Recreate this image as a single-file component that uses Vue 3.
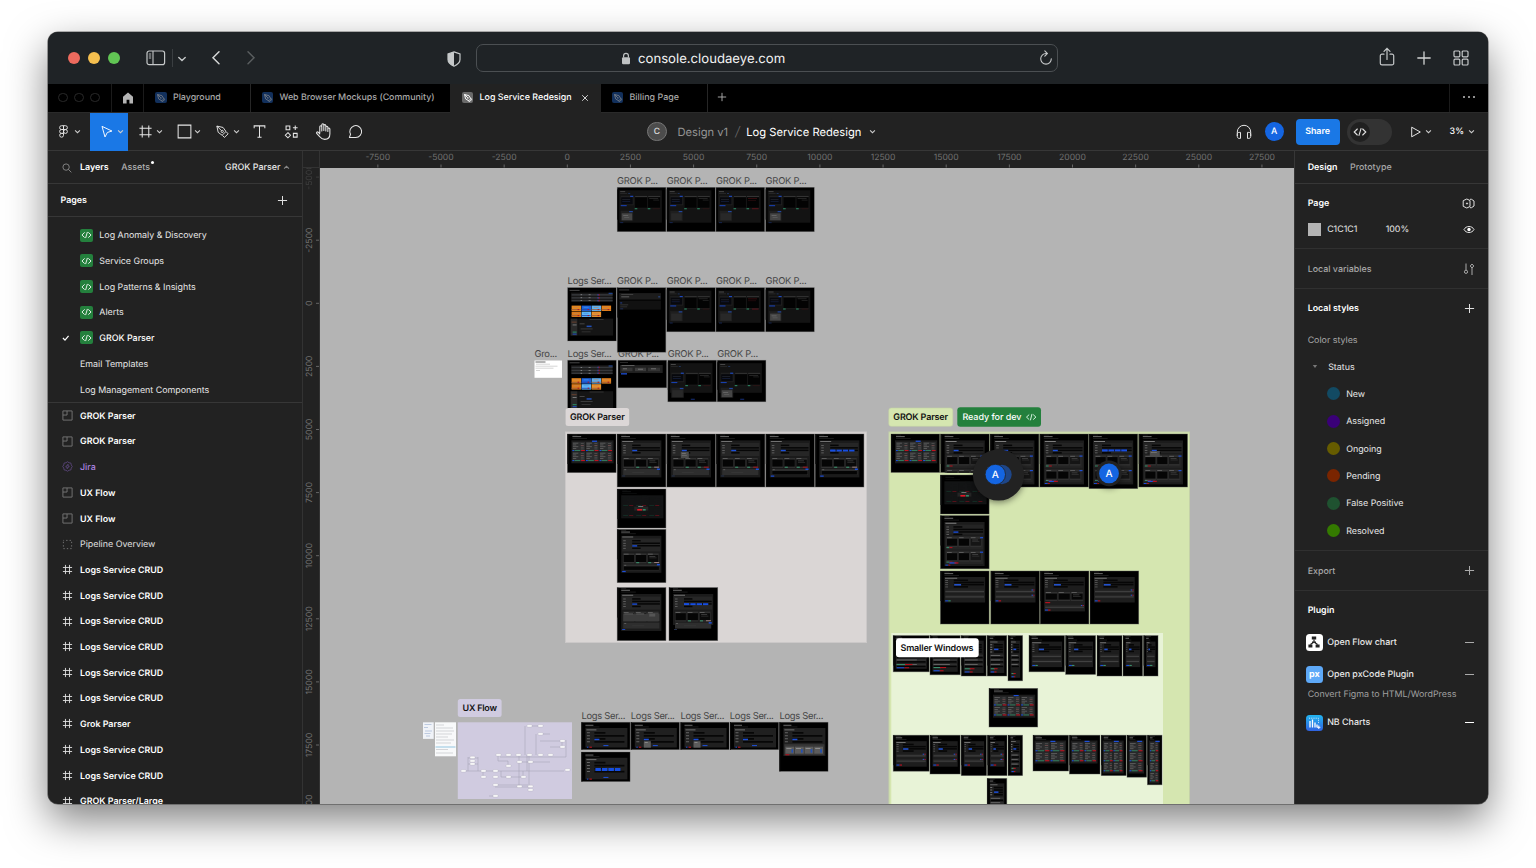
<script setup>
const pages = ['Log Anomaly & Discovery', 'Service Groups', 'Log Patterns & Insights', 'Alerts', 'GROK Parser']
const plainPages = ['Email Templates', 'Log Management Components']
const layers = [
  ['section', 'GROK Parser'], ['section', 'GROK Parser'], ['widget', 'Jira'],
  ['section', 'UX Flow'], ['section', 'UX Flow'], ['group', 'Pipeline Overview'],
  ['frame', 'Logs Service CRUD'], ['frame', 'Logs Service CRUD'], ['frame', 'Logs Service CRUD'],
  ['frame', 'Logs Service CRUD'], ['frame', 'Logs Service CRUD'], ['frame', 'Logs Service CRUD'],
  ['frame', 'Grok Parser'], ['frame', 'Logs Service CRUD'], ['frame', 'Logs Service CRUD'],
  ['frame', 'GROK Parser/Large']
]
const statuses = [
  ['New', '#124a63'], ['Assigned', '#3a0078'], ['Ongoing', '#665c00'],
  ['Pending', '#7a2500'], ['False Positive', '#1f5230'], ['Resolved', '#347a00']
]
const hTicks = Array.from({ length: 15 }, (_, i) => ({ v: (i - 3) * 2500, p: 567.3 + (i - 3) * 63.15 }))
const vTicks = Array.from({ length: 11 }, (_, i) => ({ v: (i - 2) * 2500, p: 303.3 + (i - 2) * 63.1 }))

const BLUE = '#1d4fd8', RED = '#b3121d', GREEN = '#3a8f6c'

// Three mapping cards with coloured action bars beneath
function cards(x, y, w, h, last = '#060606') {
  const c = w / 3, o = []
  for (let i = 0; i < 3; i++) {
    o.push([x + i * c, y, c - 0.7, h, '#303030'], [x + i * c + 0.5, y + 1.6, c - 1.7, h - 3, i === 2 ? last : '#050505'])
    o.push([x + i * c + 0.6, y + 0.4, c * 0.4, 0.6, '#777'])
  }
  o.push([x + c * 2 + 2, y + 2.6, c * 0.5, 0.6, '#555'], [x + c * 2 + 2, y + 4.2, c * 0.6, 0.6, '#3d3d3d'])
  return o
}
function head(w, x = 4) {
  return [[0, 0, 1.2, 30, '#101010'], [x, 0.8, 5, 0.5, '#333'], [x, 2.2, w * 0.18, 0.9, '#777'], [x, 4.2, w * 0.3, 0.5, '#333']]
}
function fields(w, bx, n = 4) {
  const o = []
  for (let i = 0; i < n; i++) {
    const y = 11 + i * 2.5
    o.push([6, y, 2.6, 0.8, '#6a6a6a'])
    o.push([bx, y - 0.4, i % 3 === 0 ? (w - bx) * 0.25 : w - bx - 6, 1.5, '#060606'])
  }
  o.push([bx, 15.8, Math.min(5, w * 0.2), 1.4, BLUE])
  return o
}
const kinds = {
  parse(w, h, v) {
    const t = v.top || 0, o = [[0, 2, 1, h - 14, '#0c0c0c'], [2, 3, w - 6, h - 12, '#131313'], [3, 4, 5, 0.8, '#555'], [3, 6, 7, 0.6, '#333'], [11, 6, 2, 0.7, '#274073']]
    o.push([3.5, 8.5 + t, 13, 9.5, '#202020'], [4, 10 + t, 11.5, 7, '#07080d'], [13, 8.5 + t, 3, 1, BLUE], [5, 12 + t, 8, 0.5, '#303540'], [5, 14 + t, 8, 0.5, '#1d2a55'], [3.5, 17.8 + t, 6, 1.1, '#183fae'])
    for (const i of [17.5, 30.5]) o.push([i, 8.5 + t, 12.8, 13, '#1a1a1a'], [i + 0.4, 10 + t, 12, 10.4, '#030303'], [i + 0.5, 8.7 + t, 12, 0.8, '#3a3a3a'], [i, 20.8 + t, 2.6, 1.2, '#2b7d5c'])
    o.push([36, 21 + t, 6.5, 0.9, v.red ? '#63151c' : '#2c1515'])
    if (v.red) o.push([32, 11 + t, 9, 0.6, '#531116'], [32, 13 + t, 8, 0.5, '#3a1114'])
    else o.push([32, 11 + t, 9, 0.5, '#444'], [36, 12.5 + t, 6, 0.5, '#383838'])
    o.push([3.5, 23.5 + t, 12.5, 10, '#1f1f1f'], [4.5, 26 + t, 10.5, 7, v.light ? '#454545' : '#282828'], [12, 23.7 + t, 3.6, 1.2, '#2046a0'])
    if (v.light) o.push([6, 28 + t, 5, 0.6, '#777'], [7, 30 + t, 5, 0.6, '#666'])
    o.push(t ? [23, 38.6, 4, 0.8, '#1d3c99'] : [3, 35, 3, 0.8, '#182c60'])
    return o
  },
  empty(w) {
    return [[0, 0, 1, 30, '#0e0e0e'], [2, 2, 10, 0.7, '#555'], [2, 5.5, w - 7, 6.5, '#1c1c1c'], [4, 6.8, 12, 0.6, '#555'], [4, 8.4, 8, 1.5, '#484848'], [41, 8.5, 2, 1.4, '#294172'], [2, 13, w - 7, 9, '#111'], [3, 15, 2, 0.7, '#2d55c5'], [3, 17, 8, 0.6, '#4a4a4a'], [3, 19, 7, 0.6, '#444'], [3, 21, 3, 0.6, '#2b4384']]
  },
  dash(w) {
    const o = [[2, 2.3, 10, 0.7, '#666'], [3.5, 5, 41.5, 9, '#171717'], [41, 5.2, 4, 1.4, '#1e438c']]
    for (const y of [6.5, 9.5, 12.3]) o.push([4, y, 41, 1.5, '#35373a'], [13, y + 0.4, 1.5, 0.6, '#aaa'], [21, y + 0.4, 2, 0.6, '#999'], [30, y, 1, 1.5, BLUE], [31, y, 1, 1.5, RED])
    const cols = ['#e8871c', '#1d62dc', '#5db0f6', '#e8831a', '#dd7917', '#62b8f8', '#ee922a']
    for (let i = 0; i < 7; i++) {
      const x = 4 + (i % 4) * 10, y = 18 + Math.floor(i / 4) * 6
      o.push([x, y, 9.5, 5.4, cols[i]], [x, y + 3.6, 9, 0.9, i % 4 === 1 ? '#2149ac' : '#97603d'], [x + 2, y + 1.3, 5, 0.7, i % 4 === 1 ? '#4090e8' : '#ba865a'], [x + 6, y + 3.5, 1.5, 1, RED])
    }
    o.push([3, 31, 7, 17, '#292929'], [10.5, 31, 35, 17, '#151515'], [4, 34, 5, 1, '#68402d'], [22, 31.5, 14, 0.6, '#484848'], [5, 37, 4, 0.7, '#999'], [12, 36, 5, 0.6, '#666'], [19, 38, 5, 1.5, '#214fb6'], [13, 41, 12, 0.7, '#4b4b4b'], [14, 44, 9, 0.6, '#444'], [5, 44, 4, 1, '#278f6a'], [5, 46, 4, 1, '#2150c5'])
    return o
  },
  slim(w) {
    return [[2, 2, 8, 0.6, '#444'], [2, 4.8, w - 6, 8, '#202020'], [3.5, 5, 13, 0.7, '#777'], [3.5, 7.5, 11, 3.5, '#353535'], [17, 7.5, 11, 3.5, '#3b3b3b'], [30, 7.5, 12, 3.5, '#333'], [5, 8.3, 4, 0.7, '#888'], [20, 8.6, 5, 0.7, '#888'], [33, 8.3, 5, 0.7, '#888'], [3, 13, 6, 1.3, BLUE]]
  },
  table(w, h, v) {
    const n = v.n || 3, rows = v.rows || 2, left = w > 40 ? 5 : 2.5, top = w > 40 ? 8 : 7, cw = (w - left - 3) / n, o = head(w, left)
    o.push([left - 1, top - 1.7, w - left - 1.5, rows * 10 + 3, '#1c1c1c'], [left + (w - left) * 0.45, top - 1.4, Math.min(5, w * .3), 1.3, BLUE])
    for (let j = 0; j < rows; j++) for (let i = 0; i < n; i++) {
      const x = left + i * cw, y = top + j * 10
      o.push([x, y, cw - 0.9, 9.2, '#2b2c2d'])
      for (let k = 0; k < 4; k++) o.push([x + 0.5, y + 0.8 + k * 1.8, cw * (k % 2 ? 0.25 : 0.4), 0.7, '#6a6a6a'], [x + cw * 0.62, y + 1.2 + k * 1.8, cw * 0.22, 0.7, k === 1 ? '#7e5555' : '#585858'])
      o.push([x, y + 8, cw * 0.14, 1.1, BLUE], [x + cw * 0.16, y + 8, cw * 0.42, 1.1, '#33795c'], [x + cw * 0.64, y + 8, cw * 0.28, 1.1, '#c01220'])
    }
    return o
  },
  modal(w) {
    const o = kinds.table(w, 38, {}).map(r => [r[0], r[1], r[2], r[3], '#131415'])
    for (let i = 0; i < 3; i++) for (let j = 0; j < 2; j++) o.push([6 + i * 13, 16 + j * 10, 5, 1, '#132a22'], [12 + i * 13, 16 + j * 10, 4, 1, '#541019'])
    o.push([17, 17.6, 14, 4, '#242424'], [21, 17.3, 5, 0.7, '#999'], [20, 20, 5, 1.6, '#e01625'], [25.5, 20, 3, 1.6, '#348766'])
    return o
  },
  form(w, h, v) {
    const o = head(w)
    const ph = v.ph || 37
    o.push([4, 6.4, w - 8.5, ph, '#1b1b1b'], [5, 7.2, 11, 0.8, '#888'], [5, 9, w - 10.5, 13, '#262626'], ...fields(w, 15))
    if (v.tags) for (let i = 0; i < 4; i++) o.push([15 + i * 6.3, 15.6, 5.4, 1.9, '#174ee2'])
    o.push(...cards(6, 24, w - 12.5, 10, v.gray ? '#454545' : '#0a0a0a'))
    if (v.gray) o.push([6, 26, w - 12.5, 7.5, '#3c3c3c'], [7, 26, 9, 0.6, '#777'], [19, 26, 8, 0.6, '#777'], [32, 26, 6, 3, '#555'])
    else o.push([19, 32.7, 3, 1.1, GREEN], [31, 32.7, 3, 1.1, GREEN], [37, 32.7, 5, 0.9, v.red ? RED : '#a78787'])
    o.push([6, 35, w - 12.5, 6, '#2e2e2e'], [7, 35.5, 2, 0.6, '#777'])
    if (!v.gray) o.push([w - 9, 34.5, 3, 1.5, BLUE])
    if (v.input) o.push([6.5, 37, w - 13.5, 3.5, '#040404'], [5, 41.5, 3.5, 1.2, BLUE])
    else o.push([15, 38, 12, 0.5, '#3d3d3d'], [5, 41.5, 3, 0.9, v.gray ? BLUE : '#26334e'])
    if (v.menu) o.push([14, 18, 8, 6, '#4c4c4c'], [15, 19, 4, 0.6, '#888'], [15, 21, 5, 0.6, '#777'])
    return o
  },
  double(w, h, v) {
    const o = head(w)
    o.push([4, 6.4, w - 8.5, 44, '#1c1c1c'], [5, 7.2, 11, 0.8, '#999'], [5, 9, w - 10.5, 10, '#242424'], ...fields(w, 13))
    if (v.tags) for (let i = 0; i < 4; i++) o.push([13 + i * 6.4, 15.4, 5.8, 2, '#174ee2'])
    for (const y of [21.5, 36]) o.push([5, y - 1.2, w - 11, 13.6, '#242424'], ...cards(6, y, w - 13, 10, '#151515'), [w - 9, y, 3, 1.2, BLUE], [6, y + 10, 3, 1, GREEN], [9, y + 10, 3, 1, RED])
    o.push([9, 46.7, 7, 1.3, BLUE], [14, 46.7, 4, 1.3, RED], [5, 49, 3, 1, BLUE], [8, 49, 2, 1, RED])
    if (v.menu) o.push([11, 17, 10, 6, '#4c4c4c'], [12, 18, 6, 0.6, '#888'])
    return o
  },
  short(w, h, v) {
    const s = v.s || 1, L = w > 40 ? 4 : 2.5, R = w - L * 2
    const o = head(w, L)
    o.push([L, 6, R, Math.min(h - 9, 25.5 * s), '#1d1d1d'], [L + 0.6, 6.8, R * 0.3, 0.8, '#888'])
    for (let i = 0; i < 4; i++) o.push([L + 0.8, 9 + i * 2.2, Math.max(1, R * 0.07), 0.7, '#666'], [L + R * 0.23, 8.5 + i * 2.2, i % 3 === 0 ? R * 0.35 : R * 0.74, 1.5, '#060606'])
    o.push([L + R * 0.24, 13, R * 0.17, 1.6, '#2251cc'])
    if (v.mid) o.push(...cards(L + 1, 21, R - 2, 9), [L + 1, 31, 5, 1.2, RED])
    const q = v.mid ? 34 : 18.5
    for (let i = 0; i < (v.mid ? 1 : 2); i++) o.push([L + 0.8, q + i * 5.2, R - 1.6, 3.6, '#242424'], [L + 1, q + 1.8 + i * 5.2, R - 2, 0.8, '#4a4a4a'])
    for (let i = 0; i < (v.mid ? 1 : 2); i++) if (!v.teal) o.push([L + R - 4, q + i * 5.2, 1.5, 1, '#2759d2'], [L + R - 2.3, q + i * 5.2, 1.3, 1, '#aa1735'])
    const by = v.mid ? 38.5 : Math.min(h - 5, 29.3 * s)
    o.push([L + 0.8, by, 3, 1.1, BLUE], [L + 3.8, by, 2.5, 1.1, v.teal ? GREEN : '#c01122'])
    return o
  },
  dense(w, h) {
    const L = 2.5, R = w - 5, o = head(w, L)
    o.push([L, 5, R, h - 8, '#1d1d1d'], [L + 0.5, 6, R * 0.5, 0.8, '#777'])
    for (let i = 0; i < 4; i++) o.push([L + 0.5, 8.8 + i * 2.4, R * 0.14, 0.8, '#888'], [L + R * 0.3, 8.4 + i * 2.4, R * 0.6, 1.5, '#050505'])
    o.push([L + R * 0.3, 13, R * 0.3, 1.5, BLUE])
    for (let i = 0; i < 3; i++) o.push([L + 0.6, 19 + i * 4.5, R - 1.2, 3.6, '#2e2e2e'], [L + 1, 19.5 + i * 4.5, R * 0.65, 0.7, '#777'], [L + 1, 21 + i * 4.5, R - 2, 1.6, '#040404'])
    o.push([L + 1, h - 7.8, R * 0.3, 1.1, GREEN], [L + R * 0.3, h - 7.8, R * 0.24, 1.1, RED], [L + 1, h - 4.6, R * 0.25, 1.1, BLUE], [L + 1 + R * 0.25, h - 4.6, R * 0.15, 1.1, RED])
    return o
  },
  logs(w, h, v) {
    const o = [[0, 0, 1, h, '#0b0b0b'], [4, 2.6, 8, 0.9, '#777'], [4, 4.5, 14, 0.5, '#333'], [4, 5.8, 42, h > 40 ? 28 : h - 8, '#202020'], [5, 7.3, 10, 0.8, '#888']]
    for (let i = 0; i < 4; i++) {
      const y = 9.5 + i * 3
      o.push([5.5, y + 0.7, 3, 0.8, '#777'], [13, y + 0.3, i % 2 ? 30 : 11, 1.7, '#070707'])
    }
    if (v.tags) { for (let i = 0; i < 4; i++) o.push([14 + i * 6.5, 16, 5.5, 3, '#164ee0']) } else o.push([13, 16.5, 5, 1.5, BLUE])
    if (v.menu) o.push([13, 19, 7, 6.5, '#5c5c5c'], [14, 20, 3, 0.7, '#999'])
    if (h > 40) o.push([5, 22, 40, 11, '#373737'], ...[0, 1, 2, 3].flatMap(i => [[6 + i * 9.6, 24.5, 8.8, 7, '#5c5c5c'], [7 + i * 9.6, 26, 5, 0.8, '#999'], [12 + i * 9.6, 27, 1.7, 3.5, '#2451b2']]), [6, 32, 4, 1.1, RED])
    else o.push([22, h - 4.7, 5, 1.1, '#1d4cc8'], [5.5, h - 3, 1.5, 1, BLUE], [8, h - 3, 2.5, 1, '#ca1220'])
    return o
  }
}
const T = (x, y, w, h, k, v = {}) => ({ x, y, w, h, shapes: kinds[k](w, h, v).filter(r => r[0] < w && r[1] < h).map(r => [r[0], r[1], Math.min(r[2], w - r[0]), Math.min(r[3], h - r[1]), r[4]]) })
const W = 48.7
const thumbs = [
  T(617.2, 187.3, W, 44.4, 'parse', { light: 1 }), T(666.7, 187.3, W, 44.4, 'parse'), T(716, 187.3, W, 44.4, 'parse', { red: 1 }), T(765.6, 187.3, W, 44.4, 'parse', { light: 1 }),
  T(567.6, 287.6, W, 53.4, 'dash'),
  T(666.7, 287.6, W, 44.2, 'parse'), T(716, 287.6, W, 44.2, 'parse', { red: 1 }), T(765.6, 287.6, W, 44.2, 'parse', { light: 1 }),
  T(567.6, 360.2, W, 50, 'dash'), T(618, 360.2, W, 27.6, 'slim'), T(667.8, 360.2, W, 41.6, 'parse', { top: 4 }), T(717.2, 360.2, W, 41.6, 'parse', { top: 4, light: 1 }),
  T(581.4, 722.2, W, 27.5, 'logs'), T(630.8, 722.2, W, 27.5, 'logs', { menu: 1 }), T(680.5, 722.2, W, 27.5, 'logs', { menu: 1 }), T(730, 722.2, W, 27.5, 'logs'), T(779.4, 722.2, W, 49.2, 'logs'), T(581.4, 752, W, 29.6, 'logs', { tags: 1 })
]
const tallThumb = T(617.2, 287.6, W, 64.6, 'empty')
const sectionThumbs = [
  T(567.4, 434, W, 38.6, 'table'), T(617.2, 434, W, 53, 'form'), T(666.8, 434, W, 53, 'form', { menu: 1, red: 1 }), T(716.2, 434, W, 53, 'form', { red: 1 }), T(765.8, 434, W, 53, 'form', { input: 1, red: 1 }), T(815.2, 434, W, 53, 'form', { input: 1, tags: 1 }),
  T(617.2, 489, W, 39, 'modal'), T(617.2, 529.4, W, 53.2, 'form', { input: 1 }), T(617.2, 587.6, W, 53, 'form', { gray: 1 }), T(669, 587.6, W, 53, 'form', { tags: 1, ph: 31 }),
  T(891, 434, W, 38.4, 'table'), T(940.6, 434, W, 38.4, 'double'), T(990.2, 434, W, 53, 'double'), T(1039.8, 434, W, 53, 'double'), T(1089, 434, W, 54.6, 'double', { tags: 1 }), T(1138.8, 434, W, 53, 'double', { menu: 1 }),
  T(940.4, 475, W, 39, 'modal'), T(940.4, 515.6, W, 53.2, 'double'),
  T(940.4, 571, W, 53, 'short', { teal: 1 }), T(990.8, 571, W, 53, 'short'), T(1040.2, 571, W, 53, 'short', { mid: 1, s: 1.35 }), T(1090, 571, W, 53, 'short')
]
const smallThumbs = [
  T(893.2, 635.6, 36, 36.2, 'dense'), T(930, 635.6, 30.2, 39.2, 'dense'), T(961.2, 635.6, 25, 40.4, 'dense'), T(987.2, 635.6, 19.6, 40.4, 'dense'), T(1008, 635.6, 14.6, 45.2, 'dense'),
  T(1029, 635.6, 35.6, 36.2, 'short', { teal: 1 }), T(1065.6, 635.6, 30, 38.8, 'short', { teal: 1 }), T(1097, 635.6, 25, 40.4, 'short', { teal: 1 }), T(1123, 635.6, 19.6, 40.4, 'short', { teal: 1 }), T(1143.6, 635.6, 14.4, 40.4, 'short', { teal: 1 }),
  T(989, 688.4, W, 38.6, 'table'),
  T(893.2, 735.2, 36, 36, 'short'), T(930, 735.2, 30.2, 38.8, 'short'), T(961.2, 735.2, 25.4, 40.4, 'short'), T(987.4, 735.2, 19.6, 40.4, 'short'), T(1008, 735.2, 14.6, 40.4, 'dense'),
  T(1033, 735.2, 35.6, 35.8, 'table', { n: 2 }), T(1069.4, 735.2, 30.6, 38.8, 'table', { n: 2 }), T(1101.2, 735.2, 25, 40.4, 'table', { n: 2, rows: 3 }), T(1127, 735.2, 19.6, 42, 'table', { n: 1, rows: 3 }), T(1147.4, 735.2, 14.6, 49.6, 'table', { n: 1, rows: 4 }),
  T(987.2, 778.4, 19.6, 40, 'dense')
]
const G = 'GROK P...', L = 'Logs Ser...'
const labels = [
  [617, 184.3, G, 41], [666.7, 184.3, G, 41], [716, 184.3, G, 41], [765.6, 184.3, G, 41],
  [567.6, 284.4, L, 44], [617, 284.4, G, 41], [666.7, 284.4, G, 41], [716, 284.4, G, 41], [765.6, 284.4, G, 41],
  [534.6, 357.2, 'Gro...', 22.5], [567.6, 357.2, L, 44], [618, 357.2, G, 41], [667.8, 357.2, G, 41], [717.2, 357.2, G, 41],
  [581.4, 719.3, L, 44], [630.8, 719.3, L, 44], [680.4, 719.3, L, 44], [729.8, 719.3, L, 44], [779.4, 719.3, L, 44]
]
const flowNodes = [[527, 725], [538, 725], [538, 733], [560, 740], [560, 746], [496, 754], [506, 754], [516, 754], [527, 754], [538, 754], [548, 754], [506, 765], [517, 761], [528, 761], [470, 756.5], [470, 760], [470, 763], [461, 770], [481, 770], [493, 770], [565, 769], [481, 776], [493, 776], [506, 776], [521, 776], [493, 784], [517, 785.5], [528, 785.5], [528, 789], [493, 795]]
const flowPath = 'M529 726H542M525 726V755M540 734H550M536 734V755M540 741H562M550 747H562V741M566 740V757H500M498 756V761H508V766M519 755V786M529 755V790M519 762H550M463 771H564M468 757V771M478 757V771M468 758H478M468 764H478M483 771V777M501 771V777H523V771M495 785H528M495 787H528M489 796H495M527 771V755'
</script>

<template>
  <div class="desktop">
    <svg class="defs" width="0" height="0">
      <symbol id="chev" viewBox="0 0 8 8"><path d="M1.200 2.800 4 5.400 6.800 2.800" fill="none" stroke="currentColor" stroke-width="1.150" /></symbol>
      <symbol id="plus" viewBox="0 0 12 12"><path d="M6 1v10M1 6h10" fill="none" stroke="currentColor" stroke-width="1.100" /></symbol>
      <symbol id="dev" viewBox="0 0 14 10"><path d="M4.300 2 1.200 5l3.100 3M9.700 2l3.100 3-3.100 3M8 1.600 6 8.400" fill="none" stroke="currentColor" stroke-width="1.100" stroke-linecap="round" /></symbol>
      <symbol id="nib" viewBox="0 0 12 12"><path d="m2.600 2.600 4.600 1.200 2 3.200-2.200 2.200-3.200-2zM2.600 2.600 6 6M9 6.500 10 8 8 10 6.500 9" fill="none" stroke="currentColor" stroke-width="1" /><circle cx="6.200" cy="6.200" r=".8" fill="currentColor" /></symbol>
      <symbol id="frame" viewBox="0 0 12 12"><path d="M3.800 1v10M8.200 1v10M1 3.800h10M1 8.200h10" fill="none" stroke="currentColor" stroke-width="1" /></symbol>
      <symbol id="section" viewBox="0 0 12 12"><path d="M1 1h10v10H1zM1 5.500h4.500V1" fill="none" stroke="currentColor" stroke-width="1" /></symbol>
      <symbol id="group" viewBox="0 0 12 12"><path d="M1.500 1.500h9v9h-9z" fill="none" stroke="currentColor" stroke-width="1" stroke-dasharray="1.500 2.250" stroke-dashoffset=".75" /></symbol>
      <symbol id="widget" viewBox="0 0 12 12"><path d="M6 .8 7.700 1.900 9.700 2.300 10.100 4.300 11.200 6 10.100 7.700 9.700 9.700 7.700 10.100 6 11.200 4.300 10.100 2.300 9.700 1.900 7.700.8 6 1.900 4.300 2.300 2.300 4.300 1.900zM6.600 3.500 4 6.500h1.600v2L8 5.500H6.400z" fill="none" stroke="currentColor" stroke-width=".9" /></symbol>
    </svg>

    <div class="window">
      <header class="titlebar">
        <i class="light red"></i><i class="light amber"></i><i class="light green"></i>
        <svg class="i-side" width="20" height="16" viewBox="0 0 20 16" fill="none" stroke="#c5c8c9"><rect x="1" y="1" width="17.600" height="13.600" rx="2.200" stroke-width="1.200" /><path d="M7 1v13.600" stroke-width="1.100" /><path d="M2.800 4h2.400M2.800 6h2.400M2.800 8h2.400" stroke-width=".9" /></svg>
        <i class="tdiv"></i>
        <svg class="i-down" width="8" height="8" viewBox="0 0 8 8"><path d="M.8 2.600 4 5.600l3.200-3" fill="none" stroke="#c5c8c9" stroke-width="1.400" stroke-linecap="round" /></svg>
        <svg class="i-back" width="10" height="16" viewBox="0 0 10 16"><path d="M8 1.800 2 7.800l6 6" fill="none" stroke="#d2d4d4" stroke-width="1.500" stroke-linecap="round" /></svg>
        <svg class="i-fwd" width="10" height="16" viewBox="0 0 10 16"><path d="m2 1.800 6 6-6 6" fill="none" stroke="#585c5e" stroke-width="1.500" stroke-linecap="round" /></svg>
        <svg class="i-shield" width="14" height="16" viewBox="0 0 14 16"><path d="M7 .9 13 3v5.600c0 3-2.700 5.200-6 6.600-3.300-1.400-6-3.600-6-6.600V3z" fill="none" stroke="#c5c8c9" stroke-width="1.200" /><path d="M7 .9V15.200c-3.300-1.400-6-3.600-6-6.600V3z" fill="#c5c8c9" /></svg>
        <div class="url">
          <svg width="10" height="13" viewBox="0 0 10 13"><rect x="1" y="5.300" width="8" height="7" rx="1.200" fill="#bfc2c3" /><path d="M2.600 5.500V3.700a2.400 2.400 0 0 1 4.800 0v1.800" fill="none" stroke="#bfc2c3" stroke-width="1.200" /></svg>
          <span>console.cloudaeye.com</span>
          <svg class="reload" width="14" height="16" viewBox="0 0 14 16" fill="none" stroke="#c5c8c9" stroke-width="1.100" stroke-linecap="round"><path d="M12.300 8.800a5.300 5.300 0 1 1-5.300-5.300h1M5.800.9 8.400 3.500 5.800 6.100" /></svg>
        </div>
        <svg class="i-share" width="16" height="20" viewBox="0 0 16 20" fill="none" stroke="#c5c8c9" stroke-width="1.200" stroke-linecap="round"><path d="M5 7.200H3A1.700 1.700 0 0 0 1.300 8.900v7.300A1.700 1.700 0 0 0 3 17.900h10a1.700 1.700 0 0 0 1.700-1.700V8.900A1.700 1.700 0 0 0 13 7.200h-2M8 12.500V1.500M5 4.300l3-3 3 3" /></svg>
        <svg class="i-add" width="14" height="14" viewBox="0 0 14 14"><path d="M7 .8v12.400M.8 7h12.400" stroke="#d2d4d4" stroke-width="1.300" stroke-linecap="round" /></svg>
        <svg class="i-grid" width="16" height="16" viewBox="0 0 16 16" fill="none" stroke="#c5c8c9" stroke-width="1.200"><rect x="1" y="1" width="5.800" height="5.800" rx="1" /><rect x="9.200" y="1" width="5.800" height="5.800" rx="1" /><rect x="1" y="9.200" width="5.800" height="5.800" rx="1" /><rect x="9.200" y="9.200" width="5.800" height="5.800" rx="1" /></svg>
      </header>

      <nav class="tabs">
        <div class="dots"><i></i><i></i><i></i></div>
        <div class="home"><svg width="12" height="12" viewBox="0 0 12 12"><path d="M6 .6 11 4.800V11.500H7.400V7.800H4.600v3.700H1V4.800z" fill="#b4b4b4" /></svg></div>
        <div class="tab t1"><span class="fav"><svg><use href="#nib" /></svg></span>Playground</div>
        <div class="tab t2"><span class="fav"><svg><use href="#nib" /></svg></span>Web Browser Mockups (Community)</div>
        <div class="tab t3"><span class="fav"><svg><use href="#nib" /></svg></span>Log Service Redesign<svg class="x" viewBox="0 0 8 8"><path d="m1.200 1.200 5.600 5.600M6.800 1.200 1.200 6.800" stroke="#d0d0d0" /></svg></div>
        <div class="tab t4"><span class="fav"><svg><use href="#nib" /></svg></span>Billing Page</div>
        <svg class="newtab"><use href="#plus" /></svg>
        <div class="more"><i></i><i></i><i></i></div>
      </nav>

      <div class="toolbar">
        <div class="tool first"><svg class="ti" viewBox="0 0 16 16" fill="none" stroke="#e6e6e6"><path d="M8 1.800H5.900a2 2 0 0 0 0 4.100H8zM8 5.900H5.900a2 2 0 0 0 0 4.100H8zM8 10H5.900A2.050 2.050 0 1 0 8 12.100zM8 1.800h2.100a2 2 0 0 1 0 4.100H8z" /><circle cx="10.100" cy="8" r="2.050" /></svg><svg class="ch"><use href="#chev" /></svg></div>
        <div class="tool active"><svg class="ti" viewBox="0 0 16 16" fill="none" stroke="#fff"><path d="m3.200 2.500 10.600 5-4.900 1.500-2.500 4.800z" stroke-linejoin="round" /></svg><svg class="ch"><use href="#chev" /></svg></div>
        <div class="tool"><svg class="ti" viewBox="0 0 16 16" fill="none" stroke="#e6e6e6" stroke-width="1.100"><path d="M4.500 1.500v13M11.500 1.500v13M1.500 4.500h13M1.500 11.500h13" /></svg><svg class="ch"><use href="#chev" /></svg></div>
        <div class="tool"><svg class="ti" viewBox="0 0 16 16" fill="none" stroke="#e6e6e6"><path d="M1.200 1.200h13.600v13.600H1.200z" stroke-width="1.100" /></svg><svg class="ch"><use href="#chev" /></svg></div>
        <div class="tool"><svg class="ti" viewBox="0 0 16 16" fill="none" stroke="#e6e6e6" stroke-linejoin="round"><path d="M2 2.200 8.600 3.700 11.700 8 7.600 12 3.400 8.900zM2 2.200 6.800 7M12 8.300 14 10.500 10 14.300 8 12.200" /><circle cx="7.700" cy="7.900" r="1.200" /></svg><svg class="ch"><use href="#chev" /></svg></div>
        <div class="tool single"><svg class="ti" viewBox="0 0 16 16" fill="none" stroke="#e6e6e6"><path d="M2.300 4.500V2h11.400v2.500M8 2v12.200M5.800 14.200h4.400" stroke-width="1.100" /></svg></div>
        <div class="tool single"><svg class="ti" viewBox="0 0 16 16" fill="none" stroke="#e6e6e6"><path d="M2.200 2.200h4v4h-4zM10 10h4v4h-4zM12 1.500v5M9.500 4h5M4.200 9.200 6.900 12 4.200 14.800 1.400 12z" stroke-width="1.100" /></svg></div>
        <div class="tool single"><svg class="ti hand" viewBox="0 0 16 16" fill="none" stroke="#e6e6e6" stroke-linejoin="round" stroke-linecap="round"><path d="M4.500 9.500V3.600a.9.900 0 0 1 1.900 0V7.500M6.400 3V1.700a.9.900 0 0 1 1.900 0V7M8.300 2.500a.9.900 0 0 1 1.900 0V7.500M10.200 4a.9.900 0 0 1 1.900 0V8M12.100 5.600a.9.900 0 0 1 1.900 0v4.800c0 3-2 5-4.900 5-2.200 0-3.400-.8-4.500-2.400L1.600 9.800c-.7-1.100.5-1.900 1.400-1.100l1.500 1.500" /></svg></div>
        <div class="tool single"><svg class="ti" viewBox="0 0 16 16" fill="none" stroke="#e6e6e6"><path d="M1.500 14.300h6.700A6.300 6.300 0 1 0 2.700 11z" stroke-width="1.100" stroke-linejoin="round" /></svg></div>

        <div class="crumb"><b class="team">C</b><span class="proj">Design v1</span><em>/</em><span class="file">Log Service Redesign</span><svg class="ch"><use href="#chev" /></svg></div>

        <div class="right">
          <svg class="phones" width="16" height="16" viewBox="0 0 16 16" fill="none" stroke="#e6e6e6"><path d="M1.300 12V8a6.700 6.700 0 0 1 13.400 0v4M1.300 10.500C1.300 9 2 8.400 3.200 8.400h1.300v6H3.200c-1.200 0-1.900-.8-1.900-2zM14.700 10.500c0-1.500-.7-2.100-1.900-2.100h-1.300v6h1.300c1.200 0 1.900-.8 1.900-2z" /></svg>
          <b class="me">A</b>
          <b class="share">Share</b>
          <div class="switch"><i><svg><use href="#dev" /></svg></i></div>
          <svg class="play" viewBox="0 0 12 12"><path d="M1.700 1.200v9.600L10.300 6z" fill="none" stroke="#e6e6e6" stroke-linejoin="round" /></svg>
          <svg class="ch c1"><use href="#chev" /></svg>
          <span class="pct">3%</span>
          <svg class="ch"><use href="#chev" /></svg>
        </div>
      </div>

      <main class="body">
        <aside class="left">
          <div class="lhead"><svg class="mag" viewBox="0 0 11 11" fill="none" stroke="#8a8a8a"><circle cx="4.500" cy="4.500" r="3.500" /><path d="m7 7 3.300 3.300" /></svg><b>Layers</b><span class="assets">Assets<i></i></span><span class="cur">GROK Parser</span><svg class="ch up"><use href="#chev" /></svg></div>
          <div class="phead"><b>Pages</b><svg class="pl"><use href="#plus" /></svg></div>
          <ul class="pages">
            <li v-for="(p, i) in pages" :key="p"><span class="tick"><svg v-if="i === 4" viewBox="0 0 8 8"><path d="m1 4 2.200 2.200L7 1.800" fill="none" stroke="#fff" stroke-width="1.300" /></svg></span><span class="badge"><svg><use href="#dev" /></svg></span><span class="name" :class="{ sel: i === 4 }">{{ p }}</span></li>
            <li v-for="p in plainPages" :key="p"><span class="tick"></span><span class="name">{{ p }}</span></li>
          </ul>
          <ul class="layers">
            <li v-for="(l, i) in layers" :key="i" :class="l[0]"><svg><use :href="'#' + l[0]" /></svg><span class="name">{{ l[1] }}</span></li>
          </ul>
        </aside>

        <section class="stage">
          <svg class="ruler-h" width="992" height="17" viewBox="303 151 992 17">
            <g v-for="t in hTicks" :key="t.v"><path :d="`M${t.p} 164.500v3`" stroke="#666" /><text :x="t.p" y="160.200" text-anchor="middle">{{ t.v }}</text></g>
            <path d="M319.500 151v17M303 167.500h17" stroke="#333" />
          </svg>
          <div class="stage-row">
            <svg class="ruler-v" width="17" height="636" viewBox="303 168 17 636">
              <g v-for="t in vTicks" :key="t.v" :opacity="t.v === -5000 ? 0.35 : 1"><path :d="`M316 ${t.p}h3.500`" stroke="#666" /><text :transform="`translate(311.800 ${t.p}) rotate(-90)`" text-anchor="middle">{{ t.v }}</text></g>
              <path d="M319.500 168v636" stroke="#333" />
            </svg>
            <svg class="canvas" width="974" height="636" viewBox="320 168 974 636">
              <g class="frame-label"><text v-for="(l, i) in labels" :key="i" :x="l[0]" :y="l[1]" :textLength="l[3]" lengthAdjust="spacing">{{ l[2] }}</text></g>

              <g v-for="(t, i) in thumbs" :key="'a' + i" :transform="`translate(${t.x} ${t.y})`">
                <rect :width="t.w" :height="t.h" fill="#000" stroke="#777" stroke-opacity=".5" stroke-width=".6" />
                <rect v-for="(s, j) in t.shapes" :key="j" :x="s[0]" :y="s[1]" :width="s[2]" :height="s[3]" :fill="s[4]" />
              </g>
              <g :transform="`translate(${tallThumb.x} ${tallThumb.y})`">
                <rect :width="tallThumb.w" :height="tallThumb.h" fill="#000" stroke="#777" stroke-width=".5" />
                <rect v-for="(s, j) in tallThumb.shapes" :key="j" :x="s[0]" :y="s[1]" :width="s[2]" :height="s[3]" :fill="s[4]" />
              </g>
              <g><path d="M534.500 360.500h27.500v17.300h-27.500z" fill="#fff" /><path d="M535.500 362h10" stroke="#444" stroke-width=".8" /><path d="M536 364.200h14M535.500 366.200h22M535.500 368.200h18M536 370.500h4" stroke="#bbb" stroke-width=".6" /></g>

              <rect x="565.500" y="432" width="301" height="210.500" fill="#dad6d5" stroke="#cbc8c8" />
              <rect x="889" y="432" width="300.500" height="380" fill="#d5e6b0" stroke="#c4d1a8" />
              <rect x="891.300" y="633" width="271.700" height="180" fill="#e8f3d7" />
              <rect x="565.600" y="408" width="63.600" height="18" rx="2.500" fill="#dcd7d7" />
              <rect x="888.800" y="408" width="64" height="18.300" rx="2.500" fill="#d5e6b0" stroke="#c4d3a5" stroke-width=".6" />
              <rect x="957.300" y="407.300" width="83.700" height="19.500" rx="3" fill="#24803d" />
              <rect x="457.800" y="699" width="43.800" height="18" rx="2.500" fill="#d0cbe0" />
              <g class="chip">
                <text x="570" y="420.400" textLength="54.800">GROK Parser</text>
                <text x="893.300" y="420.400" textLength="54.800">GROK Parser</text>
                <text x="962.400" y="420.400" textLength="59" class="ready">Ready for dev</text>
                <text x="462.500" y="711.200" textLength="34.500">UX Flow</text>
              </g>
              <path d="m1029.200 414.600-2.700 2.500 2.700 2.500M1033.200 414.600l2.700 2.500-2.700 2.500M1032 413.900l-1.600 6.400" fill="none" stroke="#e8fff0" stroke-width=".9" />

              <g v-for="(t, i) in [...sectionThumbs, ...smallThumbs]" :key="'b' + i" :transform="`translate(${t.x} ${t.y})`">
                <rect :width="t.w" :height="t.h" fill="#000" stroke="#555" stroke-opacity=".6" stroke-width=".7" />
                <rect v-for="(s, j) in t.shapes" :key="j" :x="s[0]" :y="s[1]" :width="s[2]" :height="s[3]" :fill="s[4]" />
              </g>

              <rect x="896" y="638.300" width="82.700" height="19" rx="3" fill="#fff" />
              <text class="small-label" x="900.500" y="651.200" textLength="73">Smaller Windows</text>

              <g class="cursor-shadow"><circle cx="998.500" cy="475" r="25.600" fill="#222" /></g>
              <circle cx="1002" cy="474.500" r="9.700" fill="#1e4688" />
              <circle cx="995.300" cy="474.500" r="10.200" fill="#1465e2" stroke="#222" stroke-width=".8" />
              <g class="cursor-shadow"><circle cx="1109" cy="473.400" r="12.800" fill="#222" /></g>
              <circle cx="1109" cy="473.400" r="9.900" fill="#1465e2" />
              <g class="initial"><text x="995.300" y="478.200">A</text><text x="1109" y="476.800">A</text></g>

              <g><path d="M423 722.300h10.700v16.600H423z" fill="#f0f3f8" /><path d="M424.500 724.500h7M424 727.500h4M425 731h7M424.500 733.500h6M426 736h4" stroke="#9aaed0" stroke-width=".6" />
                <path d="M435 722.300h21v34h-21z" fill="#f8f9fa" /><path d="M436 725h8M436 728h17M436 731h18M436 734h16M436 737h12M436 740h18M436 743h15M436 749.500h12M436 753h17" stroke="#c4c6c9" stroke-width=".7" /><path d="M435.500 747h20" stroke="#b5d6e8" stroke-width="1.500" /></g>
              <rect x="457.800" y="722.300" width="114.200" height="76.700" fill="#d0cbe0" />
              <path :d="flowPath" fill="none" stroke="#a09cb0" stroke-width=".5" />
              <rect v-for="(n, i) in flowNodes" :key="'n' + i" :x="n[0]" :y="n[1] - .3" width="5" height="2.400" rx=".8" fill="#fafafa" stroke="#aaa7b5" stroke-width=".3" />
            </svg>
          </div>
        </section>

        <aside class="rightpanel">
          <div class="rhead"><b>Design</b><span>Prototype</span></div>
          <div class="sec page">
            <div class="row r26"><b>Page</b><svg width="13" height="11" viewBox="0 0 13 11" fill="none" stroke="#e0e0e0"><path d="M4.800 1 8 2.500V8.500L4.800 10 1.200 8.300V2.700zM8 1.300h1.500L12 3v5L9.500 9.700H8" /><circle cx="5" cy="5.500" r=".6" fill="#e0e0e0" /></svg></div>
            <div class="row r26"><i class="swatch"></i><span class="hex">C1C1C1</span><span class="op">100%</span><svg width="12" height="9" viewBox="0 0 12 9" fill="none" stroke="#e0e0e0"><path d="M1 4.500C2 2.600 3.800 1.500 6 1.500s4 1.100 5 3c-1 1.900-2.800 3-5 3s-4-1.100-5-3z" /><circle cx="6" cy="4.500" r="1.700" fill="#fff" stroke="none" /></svg></div>
          </div>
          <div class="sec row h40 dim"><b class="md">Local variables</b><svg width="12" height="12" viewBox="0 0 12 12" fill="none" stroke="#aaa"><path d="M3 .5v6.500M9 5v7" /><circle cx="3" cy="8.800" r="1.600" /><path d="m9 1 1.800 2L9 5 7.200 3z" /></svg></div>
          <div class="sec styles">
            <div class="row h40"><b>Local styles</b><svg class="pl"><use href="#plus" /></svg></div>
            <div class="row cs">Color styles</div>
            <div class="row st"><svg width="6" height="5" viewBox="0 0 6 5"><path d="M.8 1h4.400L3 4z" fill="#777" /></svg><span class="name">Status</span></div>
            <div v-for="s in statuses" :key="s[0]" class="row status"><i :style="{ background: s[1] }"></i><span class="name">{{ s[0] }}</span></div>
          </div>
          <div class="sec row h40 dim"><b class="md">Export</b><svg class="pl"><use href="#plus" /></svg></div>
          <div class="row h40 ptitle"><b>Plugin</b></div>
          <div class="row plug"><span class="ico flow"><svg viewBox="0 0 16 16"><path d="M5.800 2.500h4.400v3H5.800zM2.400 10.500h4v3h-4zM9.600 10.500h4v3h-4z" fill="#222" /><path d="M8 5.500v3M4.400 10.500 8 8l3.600 2.500M6 8h4" stroke="#222" fill="none" stroke-width="1.200" /></svg></span>Open Flow chart<i class="minus"></i></div>
          <div class="row plug"><span class="ico px">px</span>Open pxCode Plugin<i class="minus"></i></div>
          <div class="desc">Convert Figma to HTML/WordPress</div>
          <div class="row plug nb"><span class="ico charts"><svg viewBox="0 0 16 16" fill="none" stroke="#fff"><path d="M4 6v6.500M6.500 4.500v8M9 7.500v5M11 9.500v3" stroke-width="1.300" /><path d="M3 3.200h9.500v6" stroke-dasharray="1.200 1" stroke-width=".7" /><path d="M12.800 10.500v3.500M11.200 12.300h3.200" /></svg></span>NB Charts<i class="minus hi"></i></div>
        </aside>
      </main>
    </div>
  </div>
</template>

<style>
html, body { margin: 0; background: #fff; overflow: hidden; }
</style>
<style scoped>
* { box-sizing: border-box; }
.desktop { width: 1536px; height: 868px; padding: 32px 48px; background: #fff; font-family: Inter, "Liberation Sans", sans-serif; font-size: 8.900px; color: #e8e8e8; letter-spacing: 0; text-rendering: geometricPrecision; }
.defs { display: block; position: absolute; }
svg { flex: none; }
b { font-weight: 600; }
i { font-style: normal; flex: none; }
.window { width: 1440px; height: 772px; border-radius: 10px; overflow: hidden; background: #222; display: flex; flex-direction: column; box-shadow: 0 0 0 .6px rgba(0,0,0,.55), 0 16px 40px rgba(0,0,0,.5); }
.titlebar { height: 52px; flex: none; background: #1f2326; display: flex; align-items: center; padding-left: 20px; }
.light { width: 12px; height: 12px; border-radius: 50%; margin-right: 8px; }
.red { background: #ed6a5e; } .amber { background: #f5bf4f; } .green { background: #61c554; }
.i-side { margin-left: 18px; }
.tdiv { width: 1px; height: 18px; background: #3a3e41; margin-left: 6px; }
.i-down { margin: 1px 0 0 5px; }
.i-back { margin: -1px 0 0 25px; }
.i-fwd { margin: -1px 0 0 25px; }
.i-shield { margin: 1px 0 0 191px; }
.url { width: 582px; height: 28px; margin-left: 15px; border: 1px solid #4b4f52; border-radius: 7px; display: flex; align-items: center; font-size: 13.150px; color: #f2f2f2; padding-left: 144px; }
.url span { margin-left: 7px; letter-spacing: 0; padding-top: 1px; }
.reload { margin-left: auto; margin-right: 4px; }
.i-share { margin-left: 321px; margin-top: -3px; }
.i-add { margin-left: 21.500px; } .i-grid { margin-left: 22px; }
.tabs { height: 29px; flex: none; background: #000; border-bottom: 1px solid #2a2a2a; display: flex; align-items: stretch; color: #a8a8a8; font-weight: 500; letter-spacing: -.03px; }
.dots { width: 64px; display: flex; align-items: center; gap: 6.500px; padding-left: 10px; border-right: 1.500px solid #1b1b1b; padding-bottom: 1px; }
.dots i { width: 9.600px; height: 9.600px; border: 1px solid #292929; border-radius: 50%; }
.home { width: 32px; border-right: 1.500px solid #1b1b1b; display: flex; align-items: center; justify-content: center; }
.tab { display: flex; align-items: center; padding-left: 11px; border-right: 1px solid #262626; padding-bottom: 1px; }
.t1 { width: 107px; } .t2 { width: 199px; border: 0; padding-left: 10.500px; } .t3 { width: 151px; background: #222; color: #fff; margin-bottom: -1px; border: 0; padding-bottom: 2px; padding-left: 11.500px; letter-spacing: 0; } .t4 { width: 107px; padding-left: 10.500px; letter-spacing: 0; }
.fav { width: 11.500px; height: 11.500px; border-radius: 2px; background: #12305c; display: flex; margin-right: 6.500px; color: #6e7682; }
.fav svg { width: 11.500px; height: 11.500px; }
.t3 .fav { background: #6a6a6a; color: #fff; }
.x { width: 8px; height: 8px; margin-left: 9.500px; }
.newtab { width: 10px; height: 10px; margin: 8px 0 0 9px; color: #b0b0b0; }
.more { margin-left: auto; width: 39px; border-left: 1.500px solid #1b1b1b; display: flex; align-items: center; justify-content: center; gap: 3px; padding-bottom: 2px; }
.more i { width: 2px; height: 2px; border-radius: 50%; background: #c0c0c0; }
.toolbar { height: 38px; flex: none; background: #222; border-bottom: 1px solid #373737; display: flex; align-items: stretch; position: relative; }
.tool { width: 38.500px; display: flex; align-items: center; padding-left: 10px; }
.tool.first { width: 41.500px; padding-left: 8px; }
.tool.active { background: #1a78e6; padding-left: 9px; height: 38px; padding-bottom: 1px; }
.tool.active .ch { margin-left: 3.500px; }
.tool.single { width: 32px; padding-left: 8.500px; }
.ti { width: 15px; height: 15px; }
.tool.single .hand { width: 17px; height: 17px; margin-left: -1px; }
.ch { width: 7px; height: 7px; color: #cfcfcf; margin-left: 2.500px; flex: none; }
.crumb { position: absolute; left: 599px; top: 0; height: 37px; display: flex; align-items: center; font-size: 11.200px; letter-spacing: 0; }
.team { width: 19.500px; height: 19.500px; border-radius: 50%; background: #4c4c4c; border: 1px solid #777; display: flex; align-items: center; justify-content: center; font-size: 8.500px; color: #e0e0e0; margin-right: 11px; font-weight: 500; }
.proj { color: #949494; } .crumb em { color: #6a6a6a; margin: 0 6.500px 0 7px; font-weight: 300; font-size: 13px; } .file { color: #fff; } .crumb .ch { margin-left: 8px; }
.right { margin-left: auto; display: flex; align-items: center; padding-right: 13.500px; }
.me { width: 19px; height: 19px; border-radius: 50%; background: #1465e2; color: #fff; display: flex; align-items: center; justify-content: center; margin-left: 13px; font-weight: 500; }
.share { width: 44px; height: 26px; border-radius: 4px; background: #1a78e6; color: #fff; display: flex; align-items: center; justify-content: center; margin-left: 12px; }
.switch { width: 45px; height: 26px; border-radius: 13px; background: #333; padding: 3px; margin-left: 7px; }
.switch i { display: flex; width: 20px; height: 20px; border-radius: 50%; background: #202020; align-items: center; justify-content: center; }
.switch svg { width: 14px; height: 10px; color: #e0e0e0; }
.play { width: 12px; height: 12px; margin-left: 18px; }
.c1 { margin-left: 3px; } .pct { margin-left: 18px; color: #fff; font-weight: 500; } .pct + .ch { margin-left: 3.500px; }
.body { flex: 1; min-height: 0; display: flex; }
.left { width: 255px; border-right: 1px solid #333; overflow: hidden; height: 653px; }
.lhead { height: 33px; display: flex; align-items: center; border-bottom: 1px solid #373737; padding: 1px 12px 0 14px; }
.mag { width: 10px; height: 10px; margin-right: 8px; } .lhead b { color: #fff; }
.assets { color: #b0b0b0; font-weight: 500; margin-left: 12.500px; position: relative; }
.assets i { position: absolute; right: -4.500px; top: -1.500px; width: 3.500px; height: 3.500px; border-radius: 50%; background: #fff; }
.cur { margin-left: auto; font-weight: 500; } .up { transform: rotate(180deg); color: #888; }
.phead { height: 33px; display: flex; align-items: center; justify-content: space-between; border-bottom: 1px solid #373737; padding: 1px 14px 0 12.500px; color: #fff; }
.pl { width: 11px; height: 11px; color: #e0e0e0; }
ul { list-style: none; margin: 0; padding: 0; }
.pages { padding-top: 5.300px; border-bottom: 1px solid #373737; height: 185.700px; }
.pages li, .layers li { height: 25.710px; display: flex; align-items: center; white-space: nowrap; }
.name { padding-top: 1.400px; }
.tick { width: 32px; padding-left: 14px; display: flex; } .tick svg { width: 7.500px; height: 8px; }
.badge { width: 13px; height: 13px; border-radius: 2px; background: #24803d; margin-right: 6.300px; display: flex; align-items: center; justify-content: center; color: #fff; }
.badge svg { width: 11px; height: 8px; } .sel { font-weight: 500; color: #fff; }
.layers li { padding-left: 13.500px; font-weight: 600; color: #fff; }
.layers svg { width: 11px; height: 11px; margin-right: 7.500px; color: #e0e0e0; }
.layers .section svg, .layers .group svg { color: #777; }
.layers .widget { color: #a982e0; font-weight: 500; } .layers .widget svg { color: #5d4880; }
.layers .group { font-weight: 400; color: #e0e0e0; }
.stage { width: 992px; height: 653px; overflow: hidden; }
.stage-row { display: flex; }
.ruler-h { display: block; background: #222; } .ruler-v { display: block; background: #222; }
.ruler-h text, .ruler-v text { font-size: 8.600px; fill: #707070; letter-spacing: 0; }
.canvas { display: block; background: #b4b4b4; }
.frame-label text { font-size: 9.400px; fill: #454545; letter-spacing: 0; }
.chip text, .small-label { font-size: 9px; font-weight: 600; fill: #111; letter-spacing: 0; }
.chip .ready { fill: #fff; font-weight: 500; }
.cursor-shadow { filter: drop-shadow(0 2px 3px rgba(0,0,0,.45)); }
.initial text { fill: #fff; font-size: 10px; font-weight: 500; text-anchor: middle; }
.rightpanel { width: 194px; border-left: 1px solid #373737; }
.rhead { height: 33px; display: flex; align-items: center; border-bottom: 1px solid #373737; padding: 1px 0 0 12.500px; gap: 12.500px; color: #a8a8a8; } .rhead b { color: #fff; } .rhead span { font-weight: 500; }
.sec { border-bottom: 1px solid #303030; }
.row { display: flex; align-items: center; padding: 0 13.500px 0 12.500px; } .row > b { color: #fff; margin-right: auto; }
.row .md { font-weight: 500; color: #a8a8a8; padding-top: 1px; }
.page { height: 65.300px; padding-top: 6.600px; } .r26 { height: 26px; }
.swatch { width: 13px; height: 13px; background: #b4b4b4; margin-right: 6.500px; } .hex { width: 58.500px; } .op { margin-right: auto; }
.h40 { height: 39.500px; } .dim .pl { color: #aaa; }
.styles { height: 262.500px; } .cs { height: 24.500px; color: #a8a8a8; } .st { height: 27.300px; padding-left: 17px; } .st svg { margin-right: 10px; }
.status { height: 27.320px; padding-left: 32px; } .status i { width: 13px; height: 13px; border-radius: 50%; margin-right: 6px; }
.ptitle { height: 38.500px; }
.plug { height: 32.200px; padding-left: 11px; padding-right: 14.500px; font-weight: 500; } .ptitle + .plug { margin-top: -3px; }
.ico { width: 16.500px; height: 16.500px; border-radius: 3.500px; margin-right: 4.500px; display: flex; align-items: center; justify-content: center; overflow: hidden; }
.ico svg { width: 16px; height: 16px; } .flow { background: #fff; } .px { background: #5ea9f8; color: #fff; font-weight: 700; font-size: 9px; } .charts { background: linear-gradient(#22b5f0, #2f62e0); }
.minus { width: 9px; height: 1px; background: #aaa; margin-left: auto; } .hi { background: #fff; }
.desc { padding-left: 12.500px; color: #a0a0a0; height: 12px; line-height: 7px; } .nb { margin-top: 4px; }
</style>
